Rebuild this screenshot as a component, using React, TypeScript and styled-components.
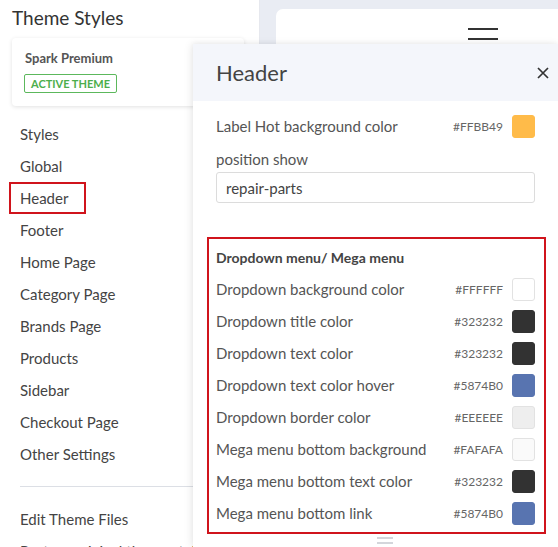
import React from "react"
import styled, { createGlobalStyle } from "styled-components"

const GlobalStyle = createGlobalStyle`
    html, body {
        margin: 0;
        padding: 0;
        height: 547px;
        overflow: hidden;
        background: #ffffff;
        font-family: Lato, "Noto Sans", sans-serif;
        color: #444;
    }
`

const Page = styled.div`
    position: relative;
    display: flex;
    height: 547px;
    overflow: hidden;
`

const Sidebar = styled.aside`
    width: 260px;
    flex-shrink: 0;
    border-right: 1px solid #e6e8ee;
    background: #fff;
    box-sizing: border-box;
`

const SidebarTitle = styled.h1`
    margin: 0;
    padding: 6px 12px 0;
    height: 32px;
    font-size: 19px;
    font-weight: 400;
    color: #333;
    line-height: 24px;
`

const ThemeCard = styled.div`
    margin: 0 15px 12px 12px;
    height: 68px;
    border-radius: 4px;
    box-shadow: 0 1px 4px rgba(0, 0, 0, 0.12);
    padding: 12px 13px 0;
    box-sizing: border-box;
`

const ThemeName = styled.div`
    font-size: 13px;
    font-weight: 700;
    color: #555;
    line-height: 16px;
`

const Badge = styled.span`
    display: inline-block;
    margin-top: 8px;
    margin-left: -1px;
    padding: 0 6px;
    height: 19px;
    line-height: 18px;
    border: 1px solid #5cb85c;
    border-radius: 2px;
    background: #fff;
    font-size: 11px;
    font-weight: 700;
    color: #4cae4c;
    box-sizing: border-box;
`

const NavList = styled.nav`
    display: flex;
    flex-direction: column;
    align-items: flex-start;
    padding-left: 9px;
`

const NavItem = styled.a<{ $active?: boolean }>`
    display: flex;
    align-items: center;
    height: 32px;
    padding: 0 16px 0 9px;
    box-sizing: border-box;
    border: 2px solid ${p => (p.$active ? "#d0141c" : "transparent")};
    font-size: 15px;
    color: #444;
    white-space: nowrap;
    text-decoration: none;
`

const Divider = styled.hr`
    margin: 16px 0 16px 20px;
    width: 240px;
    border: none;
    border-top: 1px solid #dcdfe5;
`

const Main = styled.main`
    flex: 1;
    background: #e9ecf3;
    padding: 9px 0 0 16px;
`

const PreviewCard = styled.div`
    height: 100%;
    background: #fff;
    border-radius: 7px 0 0 0;
    display: flex;
    justify-content: flex-end;
    padding: 19px 59px 0 0;
    box-sizing: border-box;
`

const Drawer = styled.section`
    position: absolute;
    top: 44px;
    left: 193px;
    right: 0;
    bottom: 0;
    background: #fff;
    box-shadow: -2px 0 8px rgba(0, 0, 0, 0.08), 0 -1px 4px rgba(0, 0, 0, 0.04);
    display: flex;
    flex-direction: column;
`

const DrawerHeader = styled.header`
    height: 57px;
    background: #f4f6fb;
    display: flex;
    align-items: center;
    justify-content: space-between;
    padding: 0 8px 0 23px;
    flex-shrink: 0;
`

const DrawerTitle = styled.h2`
    margin: 0;
    font-size: 22px;
    font-weight: 400;
    color: #444;
`

const CloseButton = styled.button`
    border: none;
    background: none;
    padding: 0;
    width: 14px;
    height: 14px;
    display: flex;
    cursor: pointer;
`

const DrawerBody = styled.div`
    padding: 9px 23px 0;
    display: flex;
    flex-direction: column;
`

const Row = styled.div`
    display: flex;
    align-items: center;
    height: 32px;
`

const Label = styled.span<{ $bold?: boolean }>`
    flex: 1;
    font-weight: ${p => (p.$bold ? 700 : 400)};
    color: ${p => (p.$bold ? "#444" : "#555")};
    font-size: ${p => (p.$bold ? "14px" : "15px")};
`

const Hex = styled.span`
    font-size: 12px;
    color: #666;
    margin-right: 9px;
`

const Swatch = styled.span<{ $color: string }>`
    width: 23px;
    height: 23px;
    border-radius: 3px;
    background: ${p => p.$color};
    border: 1px solid ${p => (p.$color === "#FFFFFF" || p.$color === "#FAFAFA" || p.$color === "#EEEEEE" ? "#e2e2e2" : p.$color)};
    box-sizing: border-box;
`

const FieldLabel = styled.div`
    font-size: 15px;
    color: #555;
    height: 21px;
    line-height: 21px;
    margin-top: 7px;
`

const TextInput = styled.input`
    margin-top: 2px;
    height: 31px;
    box-sizing: border-box;
    border: 1px solid #dcdcdc;
    border-radius: 3px;
    padding: 0 9px;
    font-family: inherit;
    font-size: 15px;
    color: #444;
    outline: none;
`

const Section = styled.div`
    margin: 34px -11px 0 -9px;
    border: 2px solid #d0141c;
    padding: 2px 9px 3px 7px;
`

const Handle = styled.div`
    margin: 3px 0 0 161px;
    width: 16px;
    display: flex;
    flex-direction: column;
    gap: 3px;

    span {
        height: 2px;
        background: #d4d6db;
    }
`

const navItems = [
    "Styles",
    "Global",
    "Header",
    "Footer",
    "Home Page",
    "Category Page",
    "Brands Page",
    "Products",
    "Sidebar",
    "Checkout Page",
    "Other Settings",
]

const colorRows = [
    { label: "Dropdown background color", color: "#FFFFFF" },
    { label: "Dropdown title color", color: "#323232" },
    { label: "Dropdown text color", color: "#323232" },
    { label: "Dropdown text color hover", color: "#5874B0" },
    { label: "Dropdown border color", color: "#EEEEEE" },
    { label: "Mega menu bottom background", color: "#FAFAFA" },
    { label: "Mega menu bottom text color", color: "#323232" },
    { label: "Mega menu bottom link", color: "#5874B0" },
]

function ColorRow({ label, color }: { label: string; color: string }) {
    return (
        <Row>
            <Label>{label}</Label>
            <Hex>{color}</Hex>
            <Swatch $color={color} />
        </Row>
    )
}

export default function App() {
    return (
        <>
            <GlobalStyle />
            <Page>
                <Sidebar>
                    <SidebarTitle>Theme Styles</SidebarTitle>
                    <ThemeCard>
                        <ThemeName>Spark Premium</ThemeName>
                        <Badge>ACTIVE THEME</Badge>
                    </ThemeCard>
                    <NavList>
                        {navItems.map(item => (
                            <NavItem key={item} $active={item === "Header"}>{item}</NavItem>
                        ))}
                    </NavList>
                    <Divider />
                    <NavList>
                        <NavItem>Edit Theme Files</NavItem>
                        <NavItem>Restore original theme styles</NavItem>
                    </NavList>
                </Sidebar>
                <Main>
                    <PreviewCard>
                        <svg width="32" height="26" viewBox="0 0 32 26">
                            <line x1="1" y1="1" x2="31" y2="1" stroke="#333" strokeWidth="2" />
                            <line x1="1" y1="11" x2="31" y2="11" stroke="#333" strokeWidth="2" />
                            <line x1="1" y1="21" x2="31" y2="21" stroke="#333" strokeWidth="2" />
                        </svg>
                    </PreviewCard>
                </Main>
                <Drawer>
                    <DrawerHeader>
                        <DrawerTitle>Header</DrawerTitle>
                        <CloseButton aria-label="Close">
                            <svg width="14" height="14" viewBox="0 0 14 14">
                                <path d="M2 2 L12 12 M12 2 L2 12" stroke="#333" strokeWidth="1.7" />
                            </svg>
                        </CloseButton>
                    </DrawerHeader>
                    <DrawerBody>
                        <ColorRow label="Label Hot background color" color="#FFBB49" />
                        <FieldLabel>position show</FieldLabel>
                        <TextInput defaultValue="repair-parts" />
                        <Section>
                            <Row>
                                <Label $bold>Dropdown menu/ Mega menu</Label>
                            </Row>
                            {colorRows.map(r => (
                                <ColorRow key={r.label} label={r.label} color={r.color} />
                            ))}
                        </Section>
                        <Handle>
                            <span />
                            <span />
                            <span />
                        </Handle>
                    </DrawerBody>
                </Drawer>
            </Page>
        </>
    )
}
